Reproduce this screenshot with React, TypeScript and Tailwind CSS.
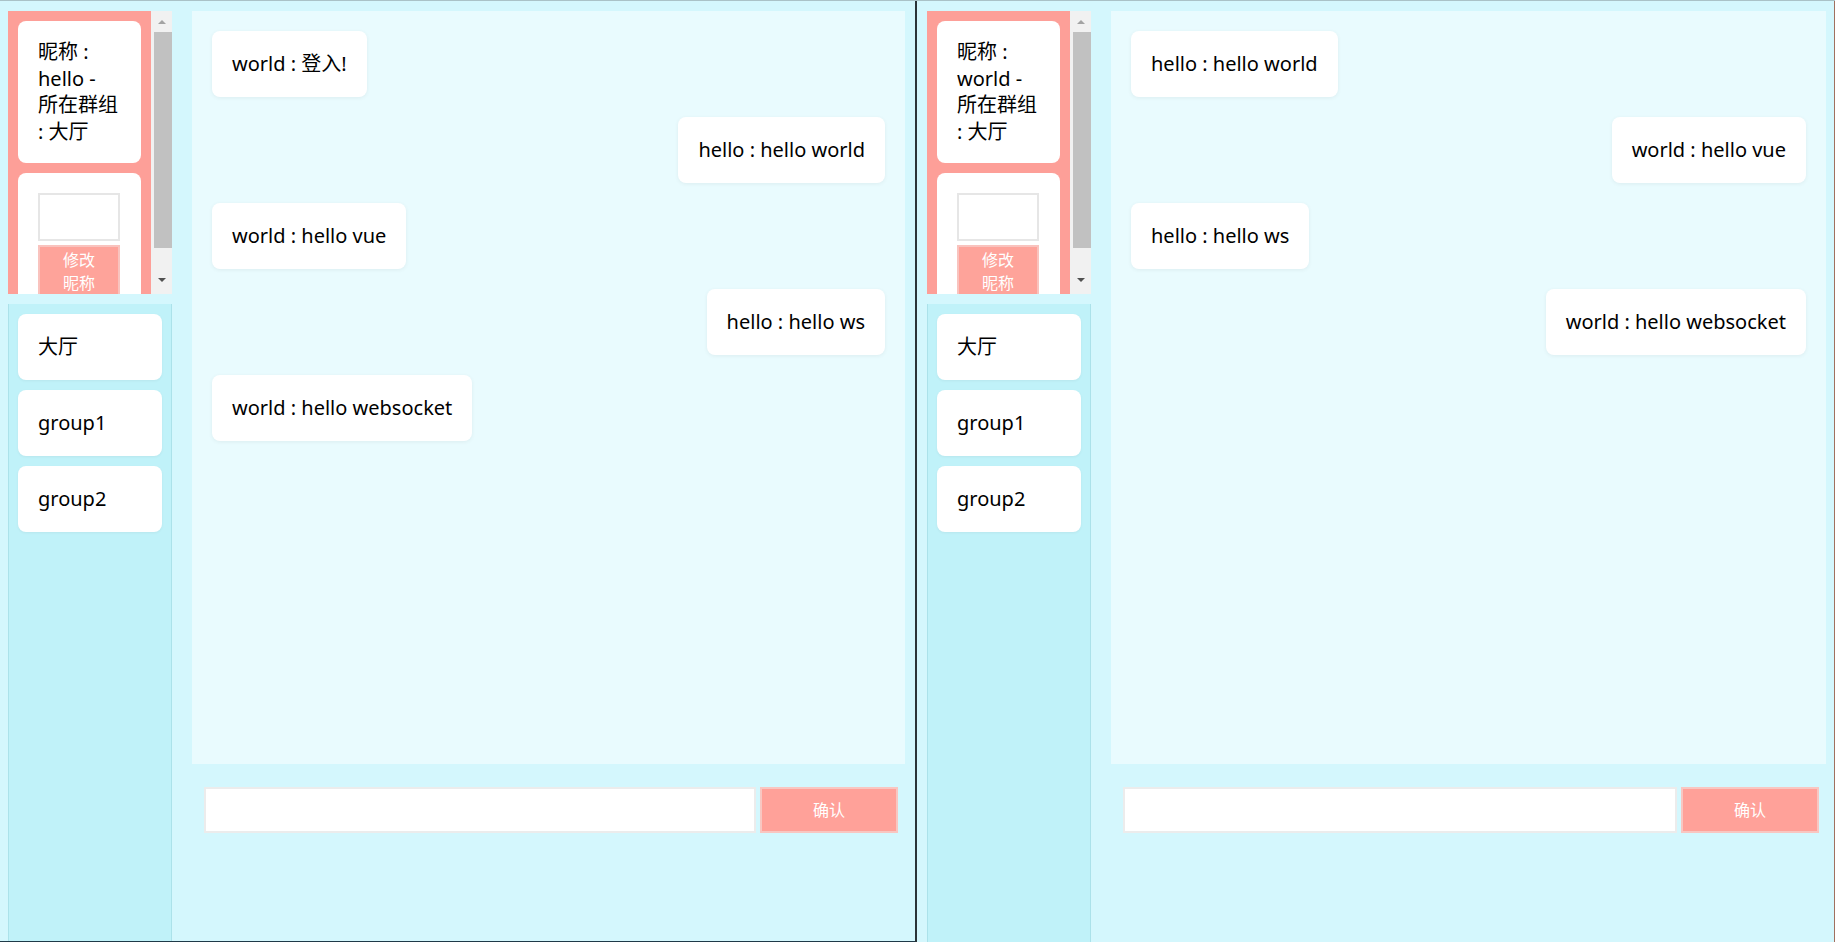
import React from 'react';

type Msg = { text: string; mine: boolean };

interface PaneProps {
    nick: string;
    messages: Msg[];
    first?: boolean;
}

const font = { fontFamily: '"Noto Sans", "Noto Sans CJK SC", sans-serif' };

const Scrollbar: React.FC = () => (
    <div className="w-[21px] h-full bg-[#f1f1f1] flex flex-col items-center">
        <div className="h-[17px] w-full flex items-center justify-center pt-[5px]">
            <div className="w-0 h-0 border-x-[4px] border-x-transparent border-b-[4px] border-b-[#a3a3a3]" />
        </div>
        <div className="mt-[4px] h-[216px] w-[18px] ml-[2px] bg-[#c1c1c1]" />
        <div className="flex-1" />
        <div className="h-[17px] w-full flex items-center justify-center mb-[6px]">
            <div className="w-0 h-0 border-x-[4px] border-x-transparent border-t-[4px] border-t-[#505050]" />
        </div>
    </div>
);

const Sidebar: React.FC<{ nick: string }> = ({ nick }) => (
    <div className="w-[164px] shrink-0 flex flex-col">
        <div className="h-[283px] flex">
            <div className="w-[143px] bg-[#fd9f98] px-[10px] pt-[10px] overflow-hidden flex flex-col gap-[10px]">
                <div className="rounded-lg bg-white pl-[20px] pr-[10px] py-[18px] text-[20px] leading-[26.5px] text-black whitespace-nowrap">
                    <div>昵称 :</div>
                    <div>{nick} -</div>
                    <div>所在群组</div>
                    <div>: 大厅</div>
                </div>
                <div className="rounded-lg bg-white pl-[20px] pr-[21px] pt-[20px] pb-[10px]">
                    <input className="block h-[48px] w-[82px] border-2 border-[#e6e6e6] bg-white outline-none" />
                    <button className="mt-[4px] w-[82px] px-[16px] py-[2px] bg-[#fea39a] border-2 border-[#f9c3be] text-white text-[16px] leading-[23px]">
                        修改昵称
                    </button>
                </div>
            </div>
            <Scrollbar />
        </div>
        <div className="mt-[10px] flex-1 bg-[#c0f2f9] border-x border-[#abe2ea] px-[9px] py-[10px] flex flex-col gap-[10px]">
            {['大厅', 'group1', 'group2'].map(g => (
                <div key={g} className="h-[66px] rounded-lg bg-white pl-[20px] flex items-center text-[20px] text-black shadow-[0_1px_3px_rgba(0,0,0,0.05)]">
                    {g}
                </div>
            ))}
        </div>
    </div>
);

const Pane: React.FC<PaneProps> = ({ nick, messages, first }) => (
    <div className={`flex shrink-0 pt-[10px] ${first ? 'w-[915px] pl-[8px] pr-[10px] border-b border-[#1f3a48]' : 'flex-1 pl-[10px] pr-[8px] border-r border-[#a0705f]'}`}>
        <Sidebar nick={nick} />
        <div className="ml-[20px] flex-1 flex flex-col">
            <div className="h-[753px] bg-[#e9fbfe] p-[20px] flex flex-col items-start gap-[20px]">
                {messages.map((m, i) => (
                    <div
                        key={i}
                        className={`rounded-lg bg-white px-[20px] py-[20px] text-[20px] leading-[26px] text-black shadow-[0_1px_4px_rgba(0,0,0,0.06)] ${m.mine ? 'self-end' : ''}`}
                    >
                        {m.text}
                    </div>
                ))}
            </div>
            <div className="mt-[23px] pl-[12px] pr-[7px] flex gap-[4px]">
                <input className="flex-1 h-[46px] border-2 border-[#ececec] bg-white outline-none" />
                <button className="w-[138px] h-[46px] bg-[#ffa199] border-2 border-[#f9c6c1] text-white text-[16px]">
                    确认
                </button>
            </div>
        </div>
    </div>
);

export default function App() {
    const left: Msg[] = [
        { text: 'world : 登入!', mine: false },
        { text: 'hello : hello world', mine: true },
        { text: 'world : hello vue', mine: false },
        { text: 'hello : hello ws', mine: true },
        { text: 'world : hello websocket', mine: false },
    ];
    const right: Msg[] = [
        { text: 'hello : hello world', mine: false },
        { text: 'world : hello vue', mine: true },
        { text: 'hello : hello ws', mine: false },
        { text: 'world : hello websocket', mine: true },
    ];
    return (
        <div className="flex h-[942px] w-[1835px] overflow-hidden bg-[#d4f7fd] border-t border-[#a9c2c7]" style={font}>
            <Pane nick="hello" messages={left} first />
            <div className="w-[2px] shrink-0 bg-[#2a3438]" />
            <Pane nick="world" messages={right} />
        </div>
    );
}
